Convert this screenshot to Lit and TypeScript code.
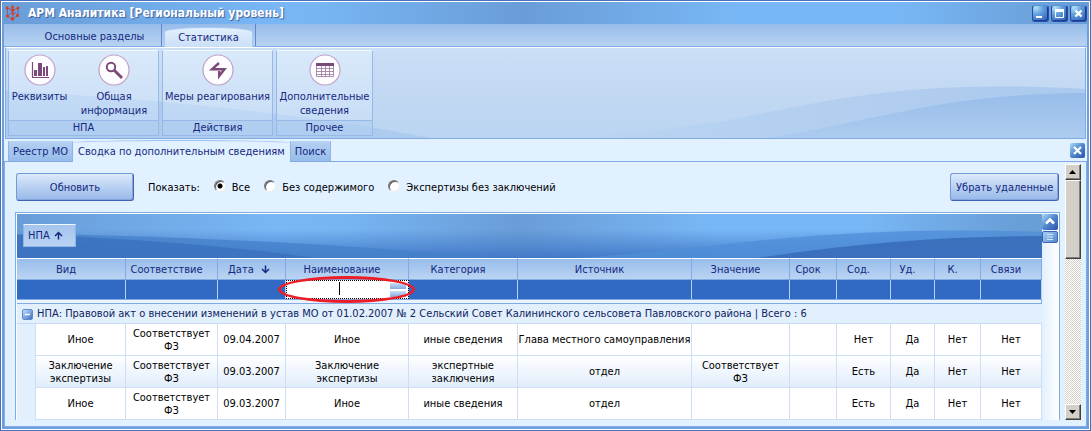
import { LitElement, html, svg, css, nothing } from "lit";
import { customElement, property, state } from "lit/decorators.js";
import { classMap } from "lit/directives/class-map.js";

interface Column {
  title: string;
  width: number;
  sort?: "up" | "down";
  nowrap?: boolean;
}

const COLUMNS: Column[] = [
  { title: "Вид", width: 109 },
  { title: "Соответствие", width: 92 },
  { title: "Дата", width: 68, sort: "down" },
  { title: "Наименование", width: 123 },
  { title: "Категория", width: 109 },
  { title: "Источник", width: 174, nowrap: true },
  { title: "Значение", width: 98 },
  { title: "Срок", width: 47 },
  { title: "Сод.", width: 54 },
  { title: "Уд.", width: 44 },
  { title: "К.", width: 46 },
  { title: "Связи", width: 61 },
];

const INDENT = 19;
const FILTER_COLUMN = 3;

const ROWS: string[][] = [
  ["Иное", "Соответствует ФЗ", "09.04.2007", "Иное", "иные сведения", "Глава местного самоуправления", "", "", "Нет", "Да", "Нет", "Нет"],
  ["Заключение экспертизы", "Соответствует ФЗ", "09.03.2007", "Заключение экспертизы", "экспертные заключения", "отдел", "Соответствует ФЗ", "", "Есть", "Да", "Нет", "Нет"],
  ["Иное", "Соответствует ФЗ", "09.03.2007", "Иное", "иные сведения", "отдел", "", "", "Есть", "Да", "Нет", "Нет"],
  ["", "", "", "", "", "", "", "", "", "", "", ""],
];

const reset = css`
  * { box-sizing: border-box; }
  button {
    font: inherit;
    color: inherit;
    background: none;
    border: 0;
    padding: 0;
    margin: 0;
  }
`;

const arrow = (dir: "up" | "down") => html`
  <svg class="arrow" width="9" height="9" viewBox="0 0 9 9" aria-hidden="true">
    <path
      d=${dir === "up" ? "M4.5 8.5V1.5M1 5l3.5-3.5L8 5" : "M4.5 0.5v7M1 4l3.5 3.5L8 4"}
      fill="none" stroke="#15287f" stroke-width="1.5"/>
  </svg>`;

@customElement("title-bar")
export class TitleBar extends LitElement {
  static styles = [reset, css`
    :host {
      display: flex;
      align-items: center;
      height: 22px;
      padding: 0 2px 0 3px;
      gap: 7px;
      background: linear-gradient(90deg, #699dd8 0%, #78b6f5 25%, #76b4f2 30%, #6a9dd7 48%, #78b7f6 68%, #78b7f6 82%, #699ed6 98%);
    }
    h1 {
      flex: 1;
      margin: 0;
      font-size: 12px;
      line-height: 20px;
      font-weight: bold;
      color: #fff;
      text-shadow: 1px 1px 1px #3d5f9e;
      white-space: nowrap;
    }
    .buttons { display: flex; gap: 2px; }
    .win {
      display: block;
      width: 17px;
      height: 17px;
      border: 1px solid #2a4ea6;
      border-top-color: #5a93d6;
      border-radius: 3px;
      background: radial-gradient(circle at 20% 10%, #b4e2f8 0, #5f9fdc 40%, #2a56b4 100%);
      box-shadow: inset -1px -1px 0 #1c3c94;
    }
    .win svg { display: block; }
  `];

  render() {
    return html`
      <svg width="16" height="16" viewBox="0 0 16 16" aria-hidden="true">
        <path d="M2 3l6 2 5-2M2.500 3v8l5 3 5.500-3.500V3M7 2l1 12M3 10.500l5-4 5 4" fill="none" stroke="#8a5a78" stroke-width=".9"/>
        <g fill="#e23c18">
          <circle cx="2" cy="3" r="1.400"/><circle cx="7.500" cy="2" r="1.400"/><circle cx="7.500" cy="5" r="1.800"/><circle cx="13" cy="3" r="1.500"/>
          <circle cx="8" cy="9" r="1.200"/><circle cx="2.500" cy="11" r="1.500"/><circle cx="12.500" cy="10.500" r="1.500"/>
          <circle cx="7.500" cy="14" r="1.700"/>
        </g>
      </svg>
      <h1>АРМ Аналитика [Региональный уровень]</h1>
      <div class="buttons">
        <button class="win" aria-label="Свернуть"><svg width="15" height="15" viewBox="0 0 15 15"><path d="M3 11h6" stroke="#fff" stroke-width="2"/></svg></button>
        <button class="win" aria-label="Развернуть"><svg width="15" height="15" viewBox="0 0 15 15"><path d="M3.500 4v7.500h8V4M3 4h9" fill="none" stroke="#fff"/><path d="M3 4.500h9" stroke="#fff" stroke-width="3"/></svg></button>
        <button class="win" aria-label="Закрыть"><svg width="15" height="15" viewBox="0 0 15 15"><path d="M4.500 4.500l6 6M10.500 4.500l-6 6" stroke="#fff" stroke-width="2.400"/></svg></button>
      </div>`;
  }
}

const GLYPHS = {
  chart: svg`
    <path d="M8.500 8v15.500H25" fill="none" stroke="#7b4a78" stroke-width="1.200"/>
    <path d="M10 16h3v6h-3zM14 9h4v13h-4zM19 13h2v9h-2zM22 12h2v10h-2z" fill="#7b4a78"/>`,
  search: svg`
    <circle cx="13" cy="13" r="4.200" fill="none" stroke="#7b4a78" stroke-width="2"/>
    <path d="M16 16l8 8" stroke="#7b4a78" stroke-width="3"/>`,
  bolt: svg`
    <path d="M17 9L10 15.200H22.500L17.200 22V17" fill="none" stroke="#7b4a78" stroke-width="2.400"/>`,
  table: svg`
    <path d="M7.500 9.500h17v13h-17zM7 14.500h18M7 17.500h18M7 20.500h18M12.500 12v11M16.500 12v11M20.500 12v11" fill="none" stroke="#9a7799" stroke-width=".8"/>
    <path d="M7 9h18v3H7z" fill="#7b4a78"/>`,
};

@customElement("ribbon-bar")
export class RibbonBar extends LitElement {
  static styles = [reset, css`
    :host { display: block; color: #15287f; }
    .tabs {
      display: flex;
      align-items: flex-end;
      height: 23px;
      border-bottom: 1px solid #82aae4;
      background: linear-gradient(#97bce9, #b8d3f2);
    }
    .tab { height: 22px; line-height: 22px; text-align: center; }
    .tab.main { width: 158px; padding-left: 24px; padding-top: 2px; border-right: 1px solid #5f87cf; }
    .tab.active {
      height: 20px;
      width: 89px;
      line-height: 20px;
      margin: 0 2px -1px 2px;
      background: linear-gradient(#e2effc, #cadff6);
      border: 1px solid #a9c8ef;
      border-bottom: 0;
      border-radius: 50% 50% 0 0 / 5px 5px 0 0;
    }
    .tab-end { width: 1px; height: 22px; background: #5f87cf; }
    .panel {
      position: relative;
      display: flex;
      gap: 3px;
      margin: 0 1px;
      padding: 2px 3px 2px 2px;
      border: 1px solid #82aae4;
      border-top: 1px solid #fff;
      background: linear-gradient(#cbdff6, #c3d8f2 45%, #bad5f2);
    }
    .waves { position: absolute; inset: 0; width: 100%; height: 100%; }
    .group {
      position: relative;
      display: flex;
      flex-direction: column;
      border: 1px solid #97b9e8;
      border-top: 1px solid #f2f8fe;
      background: linear-gradient(rgba(226, 240, 254, 0.6), rgba(215, 233, 252, 0.3));
    }
    .items { display: flex; flex: 1; min-height: 69px; padding-top: 2px; }
    .item { display: flex; flex-direction: column; align-items: center; line-height: 14px; }
    .item svg { display: block; margin-bottom: 3px; }
    .caption {
      height: 15px;
      line-height: 13px;
      text-align: center;
      border-top: 1px solid #97b9e8;
      background: rgba(160, 196, 238, 0.4);
    }
    .w60 { width: 61px; }
    .w88 { width: 88px; }
    .w109 { width: 109px; }
    .w95 { width: 95px; }
  `];

  private item(glyph: keyof typeof GLYPHS, label: string, width: string) {
    return html`
      <button class="item ${width}">
        <svg width="32" height="34" viewBox="0 -1 32 34" aria-hidden="true">
          <circle cx="16" cy="16" r="15" fill="#fdfcfe" stroke="#bfa3c6" stroke-width="1.200"/>
          ${GLYPHS[glyph]}
        </svg>
        ${label}
      </button>`;
  }

  render() {
    return html`
      <div class="tabs" role="tablist">
        <button class="tab main" role="tab" aria-selected="false">Основные разделы</button>
        <button class="tab active" role="tab" aria-selected="true">Статистика</button>
        <span class="tab-end"></span>
      </div>
      <div class="panel">
        <svg class="waves" viewBox="0 0 1080 90" preserveAspectRatio="none" aria-hidden="true">
          <defs>
            <linearGradient id="deep" x1="0" y1="0" x2="0" y2="1">
              <stop offset="0" stop-color="#98bdea"/><stop offset="1" stop-color="#adcbef"/>
            </linearGradient>
            <linearGradient id="mid" x1="1" y1="0" x2="0" y2="0">
              <stop offset="0" stop-color="#abc9ee"/><stop offset="1" stop-color="#bad5f2"/>
            </linearGradient>
          </defs>
          <path d="M0 43Q250 56 425 90H0z" fill="#adcbef"/>
          <path d="M560 90Q660 84 740 69C840 48 920 32 1080 41V90z" fill="url(#mid)"/>
          <path d="M760 90C880 72 930 46 1080 45V90z" fill="url(#deep)"/>
        </svg>
        <section class="group">
          <div class="items">
            ${this.item("chart", "Реквизиты", "w60")}
            ${this.item("search", "Общая информация", "w88")}
          </div>
          <div class="caption">НПА</div>
        </section>
        <section class="group">
          <div class="items">${this.item("bolt", "Меры реагирования", "w109")}</div>
          <div class="caption">Действия</div>
        </section>
        <section class="group">
          <div class="items">${this.item("table", "Дополнительные сведения", "w95")}</div>
          <div class="caption">Прочее</div>
        </section>
      </div>`;
  }
}

@customElement("page-tabs")
export class PageTabs extends LitElement {
  static styles = [reset, css`
    :host {
      display: flex;
      align-items: flex-end;
      height: 23px;
      padding: 0 2px 0 4px;
      border-bottom: 1px solid #82aae4;
      color: #15287f;
    }
    .tab {
      height: 20px;
      padding: 0 4px;
      line-height: 18px;
      border: 1px solid #8fb4e8;
      border-top-color: #b9d3f3;
      border-bottom: 0;
      background: linear-gradient(#b4d0f2, #97bce9);
      white-space: nowrap;
    }
    .tab.active {
      height: 22px;
      margin-bottom: -1px;
      padding: 0 5px;
      line-height: 19px;
      border-color: #9cc0ec;
      border-width: 1px 0 0;
      border-radius: 50% 50% 0 0 / 3px 3px 0 0;
      background: #e2f1ff;
    }
    .close {
      width: 15px;
      height: 15px;
      margin: 0 0 3px auto;
      border-radius: 2px;
      background: linear-gradient(135deg, #a9daf5, #4f86cc 50%, #2c51a8);
    }
    .close svg { display: block; }
  `];

  render() {
    return html`
      <button class="tab" role="tab">Реестр МО</button>
      <button class="tab active" role="tab" aria-selected="true">Сводка по дополнительным сведениям</button>
      <button class="tab" role="tab">Поиск</button>
      <button class="close" aria-label="Закрыть вкладку">
        <svg width="15" height="15" viewBox="0 0 15 15"><path d="M4 4l7 7M11 4l-7 7" stroke="#fff" stroke-width="2.200"/></svg>
      </button>`;
  }
}

@customElement("data-grid")
export class DataGrid extends LitElement {
  @property({ type: Array }) rows: string[][] = [];

  static styles = [reset, css`
    :host {
      display: flex;
      min-height: 0;
      overflow: hidden;
      border: 1px solid #82aae4;
      border-bottom: 0;
      background: #e2f0fe;
    }
    .main { flex: 1; min-width: 0; border-left: 1px solid #fff; border-top: 1px solid #fff; }
    .band {
      position: relative;
      height: 44px;
      padding: 10px 6px;
      background:
        linear-gradient(rgba(74, 127, 201, 0) 35%, rgba(62, 118, 198, 0.9)),
        linear-gradient(90deg, #699dd8 0%, #78b6f5 25%, #76b4f2 32%, #6a9dd7 49%, #78b7f6 68%, #78b7f6 82%, #699ed6 98%);
    }
    .waves { position: absolute; inset: 0; width: 100%; height: 100%; }
    .chip {
      position: relative;
      display: flex;
      align-items: center;
      gap: 4px;
      width: 53px;
      height: 23px;
      padding-left: 4px;
      color: #15287f;
      border: 1px solid #8fb4e8;
      border-top-color: #eef6fe;
      background: linear-gradient(#a3c4ec, #b9d3f3);
    }
    table { width: 100%; table-layout: fixed; border-collapse: separate; border-spacing: 0; }
    th, td { padding: 0; font-weight: normal; overflow: visible; }
    th {
      height: 22px;
      color: #15287f;
      border-top: 1px solid #fff;
      border-right: 1px solid #82aae4;
      border-bottom: 1px solid #82aae4;
      background: linear-gradient(#98bdea, #bad4f3);
      padding-right: 10px;
      white-space: nowrap;
    }
    th.sorted { padding-right: 5px; }
    th .arrow { margin: 0 0 -1px 4px; }
    .filter td { position: relative; height: 19px; background: #316ac5; border-right: 1px solid #b7d1f1; }
    .filter td.open { background: #fff; outline: 1px dotted #000; outline-offset: -1px; }
    .filter input {
      display: block;
      width: 100%;
      height: 17px;
      padding: 0 20px;
      border: 0;
      outline: 0;
      font: inherit;
      text-align: center;
      background: transparent;
    }
    .caret { position: absolute; left: 53px; top: 2px; width: 1px; height: 13px; background: #000; }
    .operator {
      position: absolute;
      right: 2px;
      top: 3px;
      width: 16px;
      height: 14px;
      background: linear-gradient(#c9def6, #86a9e0 6px, #fff 6px, #fff 8px, #c9def6 8px, #86a9e0);
    }
    .mark {
      position: absolute;
      inset: -4px -7px -4px -8px;
      border: 3px solid #ee1c24;
      border-radius: 50%;
      z-index: 1;
      pointer-events: none;
    }
    .divider td { height: 5px; border: 1px solid #82aae4; border-left: 0; background: #eaf4ff; }
    .group td { height: 20px; color: #0f2360; border-bottom: 1px solid #c9dcf5; background: #e2f0fe; }
    .toggle {
      width: 11px;
      height: 11px;
      margin: 0 4px 0 5px;
      border: 1px solid #5b8bd0;
      border-radius: 2px;
      vertical-align: -2px;
      background: linear-gradient(135deg, #c2e0f8, #3f70c0);
    }
    .toggle svg { display: block; }
    .row td {
      height: 32px;
      padding: 0 5px;
      line-height: 13px;
      text-align: center;
      color: #000;
      background: #fff;
      border-right: 1px solid #cddef6;
      border-bottom: 1px solid #cddef6;
    }
    .row td.nowrap { padding: 0; white-space: nowrap; }
    .row.alt td { background: linear-gradient(#fff, #e0edfb); }
    .row td.indent { padding: 0; background: #e2f0fe; border-bottom: 0; }
    .rail {
      width: 17px;
      padding: 1px 0;
      background: linear-gradient(90deg, #e2f0fe, #fff);
    }
    .rail button {
      display: block;
      width: 16px;
      border-radius: 2px;
      background: linear-gradient(135deg, #a9daf5, #4f86cc 50%, #2c51a8);
    }
    .rail svg { display: block; }
    .rail .up { height: 16px; margin-bottom: 1px; }
    .rail .thumb { height: 12px; background: linear-gradient(135deg, #a9d0f5, #4f86cc); border: 1px solid #3c62b4; }
  `];

  render() {
    return html`
      <div class="main">
        <div class="band">
          <svg class="waves" viewBox="0 0 1024 44" preserveAspectRatio="none" aria-hidden="true">
            <path d="M0 20Q230 22 480 44H0z" fill="#4480ca" opacity=".75"/>
            <path d="M0 21Q150 24 300 44H0z" fill="#3b72c0" opacity=".85"/>
            <path d="M560 44Q640 38 710 30Q860 12 1024 18V44z" fill="#4f8fd8" opacity=".75"/>
            <path d="M740 44Q880 22 1024 22V44z" fill="#386dba" opacity=".9"/>
          </svg>
          <button class="chip">НПА ${arrow("up")}</button>
        </div>
        <table>
          <colgroup>
            <col style="width:${INDENT}px">
            ${COLUMNS.map((c, i) => html`<col style="width:${i === 0 ? c.width - INDENT : c.width}px">`)}
          </colgroup>
          <thead>
            <tr>
              ${COLUMNS.map((c, i) => html`
                <th colspan=${i === 0 ? 2 : 1} class=${classMap({ sorted: !!c.sort })}>${c.title} ${c.sort ? arrow(c.sort) : nothing}</th>`)}
            </tr>
            <tr class="filter">
              ${COLUMNS.map((_, i) => i === FILTER_COLUMN
                ? html`<td class="open">
                    <input type="text" aria-label="Фильтр: Наименование">
                    <span class="caret"></span>
                    <button class="operator" aria-label="Условие фильтра"></button>
                    <span class="mark"></span>
                  </td>`
                : html`<td colspan=${i === 0 ? 2 : 1}></td>`)}
            </tr>
          </thead>
          <tbody>
            <tr class="divider"><td colspan="13"></td></tr>
            <tr class="group">
              <td colspan="13">
                <button class="toggle" aria-label="Свернуть группу"><svg width="9" height="9" viewBox="0 0 9 9"><path d="M2 4.500h5" stroke="#fff" stroke-width="1.500"/></svg></button>НПА: Правовой акт о внесении изменений в устав МО от 01.02.2007 № 2 Сельский Совет Калининского сельсовета Павловского района | Всего : 6
              </td>
            </tr>
            ${this.rows.map((r, n) => html`
              <tr class="row ${n % 2 ? "alt" : ""}">
                <td class="indent"></td>
                ${r.map((v, i) => html`<td class=${classMap({ nowrap: !!COLUMNS[i].nowrap })}>${v}</td>`)}
              </tr>`)}
          </tbody>
        </table>
      </div>
      <div class="rail">
        <button class="up" aria-label="Вверх"><svg width="16" height="16" viewBox="0 0 16 16"><path d="M4 9.500L8 5.500l4 4" fill="none" stroke="#fff" stroke-width="2.500"/></svg></button>
        <button class="thumb" aria-label="Прокрутка"><svg width="14" height="10" viewBox="0 0 14 10"><path d="M4 2.500h6M4 5h6M4 7.500h6" stroke="#d5e8fb"/></svg></button>
      </div>`;
  }
}

@customElement("app-root")
export class AppRoot extends LitElement {
  @state() private mode = "all";

  static styles = [reset, css`
    :host {
      display: flex;
      flex-direction: column;
      height: 100vh;
      box-sizing: border-box;
      border: 1px solid #4a70ba;
      font-family: "DejaVu Sans Condensed", "DejaVu Sans", sans-serif;
      font-size: 11px;
      background: #6c9fde;
      box-shadow: inset 0 0 0 1px #fff;
      padding: 1px;
      overflow: hidden;
    }
    .body {
      flex: 1;
      min-height: 0;
      display: flex;
      flex-direction: column;
      margin: 0 2px 2px;
      background: #e2f1ff;
    }
    .content {
      flex: 1;
      min-height: 0;
      display: flex;
      padding: 2px 5px 6px 10px;
      border: 1px solid #82aae4;
      border-top: 0;
    }
    .page { flex: 1; min-width: 0; display: flex; flex-direction: column; }
    .toolbar { display: flex; align-items: center; padding: 9px 1px 11px; gap: 14px; }
    .push {
      height: 28px;
      padding: 0 5px;
      color: #15287f;
      border: 1px solid #7699dc;
      border-right-color: #4361b4;
      border-bottom-color: #4361b4;
      border-radius: 3px;
      box-shadow: inset -1px -1px 0 #87a5df;
      background: linear-gradient(#dceafb, #bcd3f3 45%, #98b9e8);
      white-space: nowrap;
    }
    .refresh { width: 118px; }
    .purge { width: 109px; margin-left: auto; }
    fieldset { display: flex; align-items: center; gap: 14px; margin: 0; padding: 0; border: 0; }
    label { display: flex; align-items: center; gap: 6px; white-space: nowrap; }
    input[type="radio"] {
      appearance: none;
      width: 12px;
      height: 12px;
      margin: 0 0 2px;
      border: 1px solid #777;
      border-right-color: #eee;
      border-bottom-color: #eee;
      border-radius: 50%;
      background: #fff;
      box-shadow: inset 1px 1px 0 #555;
    }
    input[type="radio"]:checked { background: radial-gradient(circle at center, #000 0 2px, #fff 3px); }
    data-grid { flex: 1; }
    .scroll { display: flex; flex-direction: column; width: 16px; margin-left: 5px;
      background: repeating-conic-gradient(#d4d0c8 0 25%, #fff 0 50%) 0 0 / 2px 2px; }
    .scroll button {
      width: 16px;
      height: 16px;
      background: #d4d0c8;
      border: 1px solid #fff;
      border-right-color: #404040;
      border-bottom-color: #404040;
      box-shadow: inset -1px -1px 0 #808080;
    }
    .scroll svg { display: block; }
    .scroll .thumb { flex: 0 1 79px; }
    .scroll .down { margin-top: auto; }
  `];

  private radio(value: string, label: string) {
    return html`<label><input type="radio" name="mode" .checked=${this.mode === value}
      @change=${() => (this.mode = value)}>${label}</label>`;
  }

  render() {
    return html`
      <title-bar></title-bar>
      <div class="body">
        <ribbon-bar></ribbon-bar>
        <page-tabs></page-tabs>
        <div class="content">
          <div class="page">
            <div class="toolbar">
              <button class="push refresh">Обновить</button>
              <fieldset>
                <span>Показать:</span>
                ${this.radio("all", "Все")}
                ${this.radio("empty", "Без содержимого")}
                ${this.radio("expert", "Экспертизы без заключений")}
              </fieldset>
              <button class="push purge">Убрать удаленные</button>
            </div>
            <data-grid .rows=${ROWS}></data-grid>
          </div>
          <div class="scroll">
            <button aria-label="Вверх"><svg width="14" height="14" viewBox="0 0 14 14"><path d="M3 9h7L6.500 5z"/></svg></button>
            <button class="thumb" aria-label="Прокрутка"></button>
            <button class="down" aria-label="Вниз"><svg width="14" height="14" viewBox="0 0 14 14"><path d="M3 5h7L6.500 9z"/></svg></button>
          </div>
        </div>
      </div>`;
  }
}
